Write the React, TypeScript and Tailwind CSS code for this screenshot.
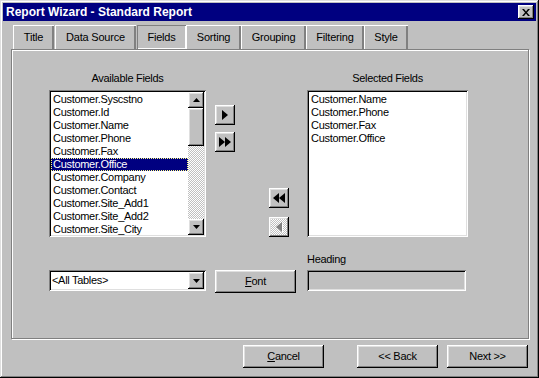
import React from "react";

const raised =
  "shadow-[inset_-1px_-1px_#000,inset_1px_1px_#fff,inset_-2px_-2px_#808080,inset_2px_2px_#dfdfdf]";
const sunken =
  "shadow-[inset_1px_1px_#808080,inset_-1px_-1px_#fff,inset_2px_2px_#000,inset_-2px_-2px_#dfdfdf]";
const dither =
  "bg-[repeating-conic-gradient(#c0c0c0_0%_25%,#ffffff_0%_50%)] bg-[length:2px_2px]";

const tabs = [
  { label: "Title", cls: "ml-[10px] w-[41px]" },
  { label: "Data Source", cls: "ml-[1px] w-[81px]" },
  { label: "Fields", cls: "ml-[1px] w-[49px]", active: true },
  { label: "Sorting", cls: "w-[55px]" },
  { label: "Grouping", cls: "w-[65px]" },
  { label: "Filtering", cls: "w-[58px]" },
  { label: "Style", cls: "w-[44px]" },
];

const available = [
  "Customer.Syscstno",
  "Customer.Id",
  "Customer.Name",
  "Customer.Phone",
  "Customer.Fax",
  "Customer.Office",
  "Customer.Company",
  "Customer.Contact",
  "Customer.Site_Add1",
  "Customer.Site_Add2",
  "Customer.Site_City",
];

const selected = ["Customer.Name", "Customer.Phone", "Customer.Fax", "Customer.Office"];

function Arrow({ dir, double, disabled }: { dir: "left" | "right"; double?: boolean; disabled?: boolean }) {
  const one = dir === "right" ? "0,0 6,5 0,10" : "6,0 0,5 6,10";
  const fill = disabled ? "#808080" : "#000";
  return (
    <svg width={double ? 12 : 7} height={11} viewBox={double ? "0 0 12 11" : "0 0 7 11"}>
      {disabled && <polygon points={one} fill="#fff" transform="translate(1,1)" />}
      <polygon points={one} fill={fill} />
      {double && <polygon points={one} fill={fill} transform="translate(6,0)" />}
    </svg>
  );
}

function SmallTri({ up }: { up?: boolean }) {
  return (
    <svg width="7" height="4" viewBox="0 0 7 4">
      <polygon points={up ? "3.5,0 7,4 0,4" : "0,0 7,0 3.5,4"} fill="#000" />
    </svg>
  );
}

function MoveButton({ children, disabled, cls }: { children: React.ReactNode; disabled?: boolean; cls: string }) {
  return (
    <div
      className={`w-[20px] h-[20px] flex items-center justify-center ${raised} ${disabled ? dither : "bg-[#c0c0c0]"} ${cls}`}
    >
      {children}
    </div>
  );
}

function Button({ children, cls }: { children: React.ReactNode; cls: string }) {
  return (
    <div className={`h-[23px] w-[81px] flex items-center justify-center bg-[#c0c0c0] ${raised} ${cls}`}>
      {children}
    </div>
  );
}

export default function App() {
  return (
    <div className="w-[539px] h-[378px] bg-[#c0c0c0] p-[3px] text-[11px] text-black font-['Liberation_Sans',Arial,sans-serif] shadow-[inset_-1px_-1px_#000,inset_1px_1px_#dfdfdf,inset_-2px_-2px_#808080,inset_2px_2px_#fff] overflow-hidden">
      {/* Title bar */}
      <div className="h-[18px] bg-[#000080] flex items-center justify-between pl-[3px] pr-[2px]">
        <span className="text-white font-bold text-[12px]">Report Wizard - Standard Report</span>
        <div className={`w-[16px] h-[14px] bg-[#c0c0c0] flex items-center justify-center ${raised}`}>
          <svg width="8" height="7" viewBox="0 0 8 7">
            <path d="M0 0h2l2 2.5L6 0h2L5 3.5 8 7H6L4 4.5 2 7H0l3-3.5z" fill="#000" />
          </svg>
        </div>
      </div>

      {/* Tabs */}
      <div className="flex mt-[4px] h-[24px]">
        {tabs.map((t) => (
          <div
            key={t.label}
            className={`${t.cls} h-[24px] flex items-center justify-center tracking-[-0.2px] ${
              t.active
                ? "shadow-[inset_1px_1px_#808080,inset_-1px_-1px_#fff]"
                : "shadow-[inset_1px_1px_#fff,inset_-2px_0_#808080]"
            }`}
          >
            {t.label}
          </div>
        ))}
      </div>

      {/* Panel */}
      <div className="ml-[8px] w-[518px] h-[290px] border border-[#808080] shadow-[inset_1px_1px_#fff,1px_1px_#fff] pl-[37px] pt-[22px] tracking-[-0.3px]">
        <div className="flex">
          {/* Available */}
          <div className="w-[157px]">
            <div className="h-[13px] leading-[13px] text-center mb-[5px]">Available Fields</div>
            <div className={`h-[147px] bg-white p-[2px] flex ${sunken}`}>
              <div className="flex-1 flex flex-col pt-[1px] overflow-hidden">
                {available.map((f) => (
                  <div
                    key={f}
                    className={`h-[13px] shrink-0 leading-[13px] pl-[2px] ${
                      f === "Customer.Office"
                        ? "bg-[#000080] text-white outline outline-1 outline-dotted outline-[#ffff80] -outline-offset-1"
                        : ""
                    }`}
                  >
                    {f}
                  </div>
                ))}
              </div>
              <div className={`w-[16px] flex flex-col ${dither}`}>
                <div className={`h-[16px] bg-[#c0c0c0] flex items-center justify-center ${raised}`}>
                  <SmallTri up />
                </div>
                <div className={`h-[38px] bg-[#c0c0c0] ${raised}`} />
                <div className="flex-1" />
                <div className={`h-[16px] bg-[#c0c0c0] flex items-center justify-center ${raised}`}>
                  <SmallTri />
                </div>
              </div>
            </div>
          </div>

          {/* Move buttons */}
          <div className="w-[101px] flex flex-col pt-[33px]">
            <MoveButton cls="ml-[9px]">
              <Arrow dir="right" />
            </MoveButton>
            <MoveButton cls="ml-[9px] mt-[7px]">
              <Arrow dir="right" double />
            </MoveButton>
            <MoveButton cls="ml-[63px] mt-[36px]">
              <Arrow dir="left" double />
            </MoveButton>
            <MoveButton cls="ml-[63px] mt-[9px]" disabled>
              <Arrow dir="left" disabled />
            </MoveButton>
          </div>

          {/* Selected */}
          <div className="w-[161px]">
            <div className="h-[13px] leading-[13px] text-center mb-[5px]">Selected Fields</div>
            <div className={`h-[147px] bg-white p-[2px] pt-[3px] ${sunken}`}>
              {selected.map((f) => (
                <div key={f} className="h-[13px] leading-[13px] pl-[2px]">
                  {f}
                </div>
              ))}
            </div>
          </div>
        </div>

        {/* Bottom row */}
        <div className="flex mt-[16px]">
          <div className={`w-[157px] h-[21px] mt-[17px] bg-white p-[2px] flex items-center ${sunken}`}>
            <span className="flex-1 pl-[1px]">&lt;All Tables&gt;</span>
            <div className={`w-[16px] h-[17px] bg-[#c0c0c0] flex items-center justify-center ${raised}`}>
              <SmallTri />
            </div>
          </div>
          <Button cls="ml-[9px] mt-[17px]">
            <span>
              <span className="underline">F</span>ont
            </span>
          </Button>
          <div className="ml-[11px] flex flex-col">
            <div className="h-[13px] leading-[13px] mb-[4px]">Heading</div>
            <div className={`w-[159px] h-[21px] bg-[#c0c0c0] ${sunken}`} />
          </div>
        </div>
      </div>

      {/* Footer */}
      <div className="flex justify-end pr-[8px] mt-[6px] tracking-[-0.3px]">
        <Button cls="">
          <span>
            <span className="underline">C</span>ancel
          </span>
        </Button>
        <Button cls="ml-[33px]">&lt;&lt; Back</Button>
        <Button cls="ml-[9px]">Next &gt;&gt;</Button>
      </div>
    </div>
  );
}
